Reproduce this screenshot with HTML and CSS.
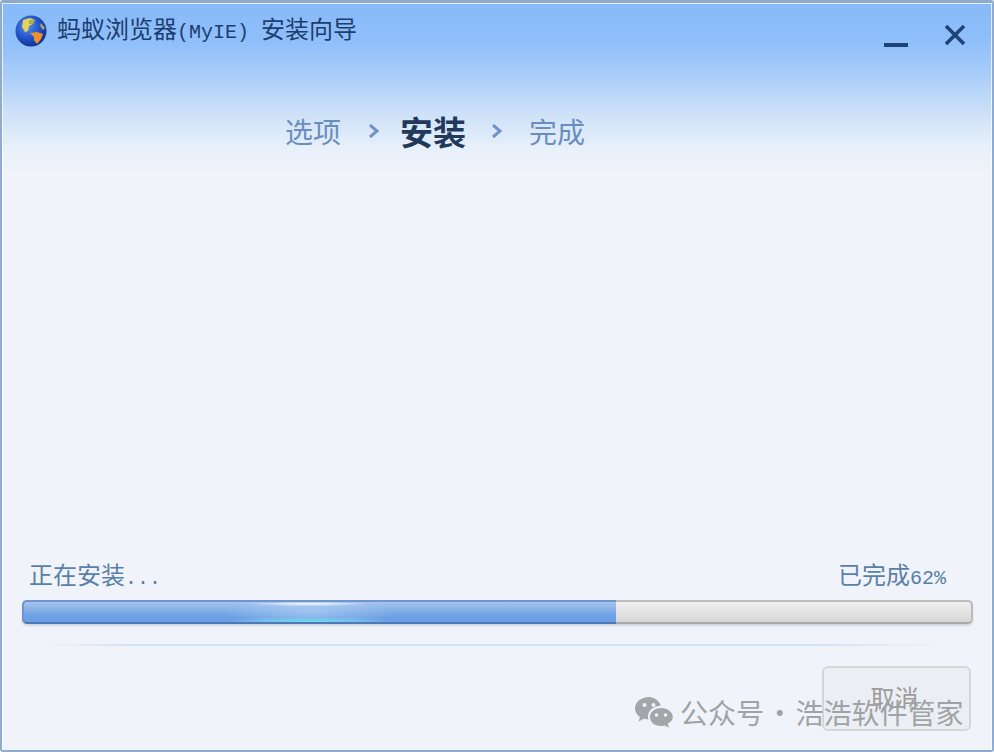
FILE: index.html
```html
<!DOCTYPE html>
<html lang="zh-CN">
<head>
<meta charset="utf-8">
<title>蚂蚁浏览器(MyIE) 安装向导</title>
<link rel="stylesheet" href="styles.css">
</head>
<body>
<div class="window">
  <header class="titlebar">
    <svg class="globe" viewBox="0 0 32 32" width="32" height="32" aria-hidden="true">
      <defs>
        <radialGradient id="sea" cx="38%" cy="35%" r="70%">
          <stop offset="0" stop-color="#4f8df0"/>
          <stop offset="0.6" stop-color="#1f4fc4"/>
          <stop offset="1" stop-color="#12308a"/>
        </radialGradient>
      </defs>
      <circle cx="16" cy="16" r="15.5" fill="url(#sea)"/>
      <path d="M8 5 L15 3 L20 5 L18 9 L14 11 L13 16 L10 17 L7 12 Z" fill="#e6d25a"/>
      <path d="M14 5 L20 5 L18 9 L14 9 Z" fill="#9fb04c"/>
      <path d="M15 18 L22 17 L28 19 L26 24 L22 29 L19 25 L19 22 Z" fill="#f0902a"/>
      <path d="M26 8 L30 13 L28 15 L25 11 Z" fill="#a8a56a"/>
    </svg>
    <h1 class="title">蚂蚁浏览器<span class="half">(MyIE) </span>安装向导</h1>
    <div class="controls">
      <svg class="ctl-min" viewBox="0 0 24 4" width="24" height="4" aria-hidden="true"><rect width="24" height="4" fill="#1f4278"/></svg>
      <svg class="ctl-close" viewBox="0 0 22 22" width="22" height="22" aria-hidden="true"><path d="M2 2 L20 20 M20 2 L2 20" stroke="#1f4278" stroke-width="3.6" fill="none"/></svg>
    </div>
  </header>

  <nav class="steps">
    <span class="step">选项</span>
    <svg class="chev chev-a" viewBox="0 0 12 14" width="12" height="14" aria-hidden="true"><path d="M2 1 L9 7 L2 13" stroke="#6f93c8" stroke-width="3" fill="none"/></svg>
    <span class="step step-on">安装</span>
    <svg class="chev chev-b" viewBox="0 0 12 14" width="12" height="14" aria-hidden="true"><path d="M2 1 L9 7 L2 13" stroke="#6f93c8" stroke-width="3" fill="none"/></svg>
    <span class="step">完成</span>
  </nav>

  <main class="spacer"></main>

  <section class="status">
    <span>正在安装<span class="half">...</span></span>
    <span>已完成<span class="half">62%</span></span>
  </section>

  <div class="progress">
    <div class="fill" style="width:62.7%"><span class="glow"></span></div>
  </div>

  <div class="rule"></div>

  <footer class="actions">
    <button class="cancel" type="button">取消</button>
  </footer>

  <div class="watermark">
    <svg viewBox="0 0 38 31" width="38" height="31" aria-hidden="true">
      <path d="M14 0 C6 0 0 5 0 11.5 C0 15 2 18 5 20 L3.500 24.500 L9 21.800 C10.500 22.300 12 22.500 13.500 22.500 C13.200 21.500 13 20.500 13 19.500 C13 13.500 18.500 9 25.800 8.700 C24 3.500 19.500 0 14 0 Z" fill="#a3a5a8"/>
      <circle cx="9.500" cy="8" r="2" fill="#eff3fb"/>
      <circle cx="18.500" cy="8" r="2" fill="#eff3fb"/>
      <path d="M26 11 C19.500 11 15 15 15 20 C15 25 19.500 29 26 29 C27.300 29 28.500 28.800 29.700 28.400 L34 30.800 L32.800 26.800 C36 25 37.800 22.700 37.800 20 C37.800 15 32.500 11 26 11 Z" fill="#a3a5a8"/>
      <circle cx="21.500" cy="18" r="1.800" fill="#eff3fb"/>
      <circle cx="30.500" cy="18" r="1.800" fill="#eff3fb"/>
    </svg>
    <span class="wm-text">公众号 · 浩浩软件管家</span>
  </div>
</div>
</body>
</html>
```
FILE: styles.css
```css
* { box-sizing: border-box; }
html, body { margin: 0; padding: 0; }
body {
  width: 994px;
  height: 752px;
  overflow: hidden;
  font-family: "Noto Sans CJK SC", "Liberation Sans", sans-serif;
}
.half {
  font-family: "Liberation Mono", monospace;
  font-size: 20px;
  white-space: pre;
}
.window {
  position: relative;
  width: 994px;
  height: 752px;
  display: flex;
  flex-direction: column;
  border: 2px solid #8fabcf;
  border-top: 3px solid #8fabc9;
  border-radius: 3px;
  background: linear-gradient(180deg, #88baf9 0, #90bffa 40px, #a9cdf9 72px, #cde1f8 110px, #e8f0fa 145px, #f0f4fa 172px, #f0f4fa 100%);
  box-shadow: inset 1px 1px 0 rgba(255,255,255,.75), inset -1px 0 0 rgba(255,255,255,.75);
}
.titlebar {
  display: flex;
  align-items: center;
  height: 56px;
  padding: 0 26px 0 13px;
  flex: none;
}
.globe { flex: none; margin-top: -1px; }
.title {
  margin: -2px 0 0 10px;
  font-size: 24px;
  font-weight: 400;
  line-height: 34px;
  color: #1c3e6e;
  white-space: nowrap;
}
.controls {
  margin-left: auto;
  margin-top: 8px;
  display: flex;
  align-items: flex-end;
  gap: 36px;
}
.ctl-close { margin-bottom: 1px; }
.steps {
  flex: none;
  display: flex;
  align-items: center;
  height: 48px;
  margin-top: 48px;
  padding-left: 283px;
}
.step {
  font-size: 28px;
  line-height: 40px;
  color: #6a8dbf;
  white-space: nowrap;
}
.step-on {
  font-size: 33px;
  font-weight: 700;
  color: #22395c;
}
.chev { flex: none; }
.chev-a { margin: 0 20px 0 27px; }
.chev-b { margin: 0 26px 0 25px; }
.spacer { flex: 1; min-height: 0; }
.status {
  flex: none;
  display: flex;
  justify-content: space-between;
  height: 36px;
  padding: 0 46px 0 27px;
  font-size: 24px;
  line-height: 36px;
  color: #5a7fa8;
}
.progress {
  flex: none;
  margin: 8px 19px 0 20px;
  height: 24px;
  border: 2px solid #bcbcbc;
  border-bottom-color: #a9a9a9;
  border-radius: 5px;
  background: linear-gradient(180deg, #efefef, #d6d6d6);
  box-shadow: 0 2px 2px rgba(120,130,150,.25);
}
.fill {
  position: relative;
  margin: -2px 0 0 -2px;
  height: 24px;
  border: 2px solid #6f94cf;
  border-bottom-color: #4f78ba;
  border-right: 0;
  border-radius: 5px 0 0 5px;
  background: linear-gradient(180deg, #a4c3ec, #6b9fe3 75%);
  overflow: hidden;
}
.glow {
  position: absolute;
  left: 200px;
  top: 0;
  width: 170px;
  height: 100%;
  background:
    radial-gradient(ellipse 60px 2px at 50% 2px, rgba(255,255,255,.95), rgba(255,255,255,0) 100%),
    radial-gradient(ellipse 85px 5px at 50% 100%, rgba(110,225,235,.95), rgba(110,225,235,0) 100%),
    radial-gradient(ellipse 85px 20px at 50% 50%, rgba(190,220,250,.5), rgba(190,220,250,0) 100%);
}
.rule {
  flex: none;
  height: 2px;
  margin: 20px 42px 0 40px;
  background: linear-gradient(90deg, rgba(205,222,243,0), #d3e1f4 10%, #d3e1f4 85%, rgba(205,222,243,0));
}
.actions {
  flex: none;
  display: flex;
  justify-content: flex-end;
  padding: 20px 21px 19px 0;
}
.cancel {
  width: 149px;
  height: 65px;
  padding: 0 4px 5px 0;
  border: 2px solid #d6d6d6;
  border-radius: 6px;
  background: #ebeef3;
  font-family: inherit;
  font-size: 24px;
  color: #9c9c9c;
}
.watermark {
  position: absolute;
  left: 633px;
  top: 690px;
  display: flex;
  align-items: center;
  gap: 7px;
  color: #a0a2a5;
}
.wm-text {
  font-size: 28px;
  line-height: 38px;
  white-space: nowrap;
  word-spacing: -4.5px;
}
```
